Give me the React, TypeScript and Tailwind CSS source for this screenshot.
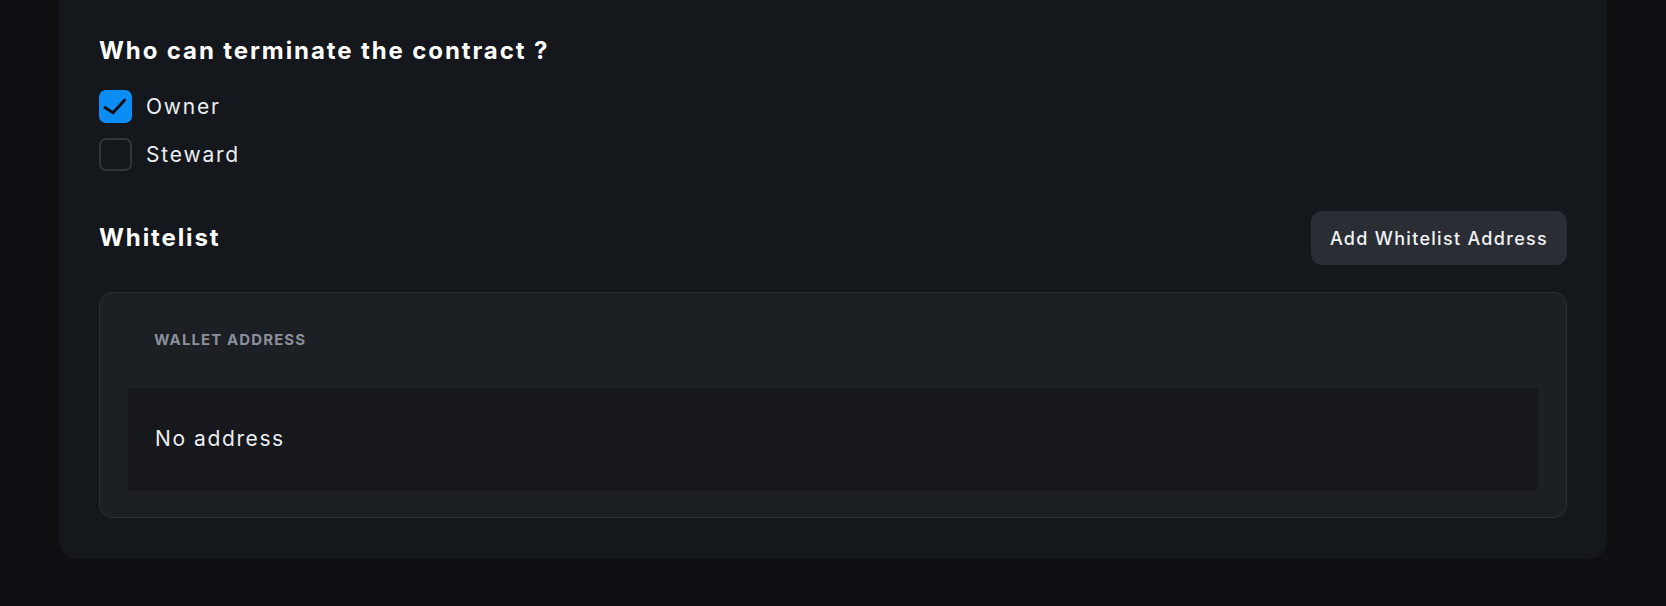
import React from "react";

function Checkbox({ checked }: { checked: boolean }) {
  if (checked) {
    return (
      <div className="w-[33px] h-[33px] rounded-[7px] bg-[#0a8ef5] flex items-center justify-center shrink-0">
        <svg width="33" height="33" viewBox="0 0 33 33" fill="none">
          <path d="M6 17.5l8 5.2L25.7 10" stroke="#0d1014" strokeWidth="3" strokeLinecap="round" strokeLinejoin="round" />
        </svg>
      </div>
    );
  }
  return <div className="w-[33px] h-[33px] rounded-[7px] border-2 border-[#31343a] bg-transparent shrink-0" />;
}

export default function App() {
  return (
    <div
      className="w-[1666px] h-[606px] bg-[#0e1013] px-[59px] overflow-hidden"
      style={{ fontFamily: "Inter, 'Noto Sans', sans-serif" }}
    >
      <div className="w-full bg-[#14171b] rounded-b-[18px] px-[40px] pt-[35px] pb-[41px] text-white">
        <h2 className="text-[24px] leading-[32px] font-bold tracking-[1.9px]">Who can terminate the contract ?</h2>
        <div className="mt-[23px] flex flex-col gap-[15px]">
          <label className="flex items-center gap-[14px]">
            <Checkbox checked />
            <span className="text-[21px] leading-[28px] tracking-[1.8px] text-[#eceef1]">Owner</span>
          </label>
          <label className="flex items-center gap-[14px]">
            <Checkbox checked={false} />
            <span className="text-[21px] leading-[28px] tracking-[1.8px] text-[#eceef1]">Steward</span>
          </label>
        </div>
        <div className="mt-[40px] flex items-center justify-between">
          <h2 className="text-[24px] leading-[32px] font-bold tracking-[1.9px]">Whitelist</h2>
          <button className="h-[54px] px-[19px] rounded-[11px] bg-[#2a2d34] text-[18px] font-medium tracking-[1.3px] text-[#f1f2f4]">
            Add Whitelist Address
          </button>
        </div>
        <div className="mt-[27px] rounded-[13px] border border-[#2c2f35] bg-[#1c1f24] px-[28px] pb-[27px]">
          <div className="h-[95px] flex items-center pl-[26px]">
            <span className="text-[15px] font-bold tracking-[1.1px] text-[#8a8f9b] uppercase">Wallet Address</span>
          </div>
          <div className="h-[102px] bg-[#16181c] flex items-center pl-[27px]">
            <span className="text-[21px] tracking-[1.6px] text-[#eceef1]">No address</span>
          </div>
        </div>
      </div>
    </div>
  );
}
